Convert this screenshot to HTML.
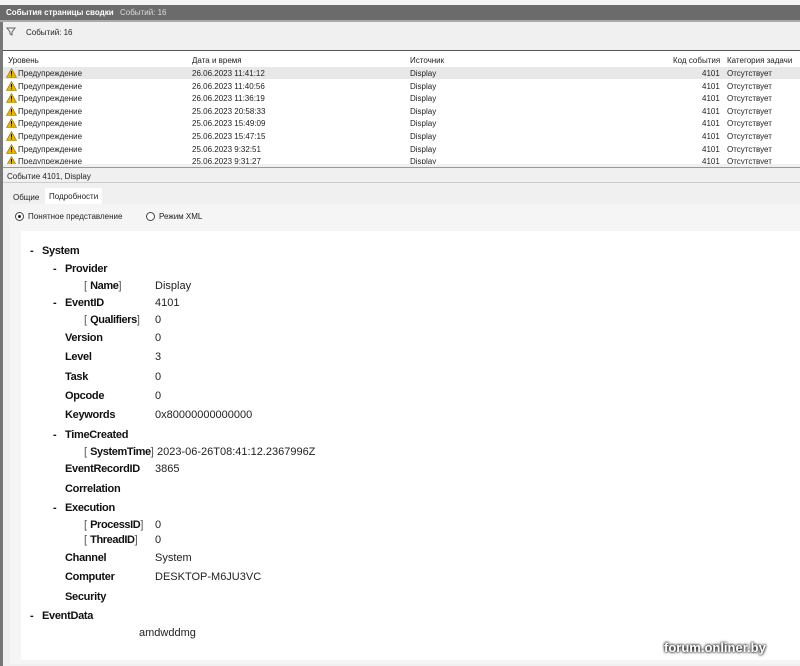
<!DOCTYPE html>
<html><head><meta charset="utf-8"><style>
body{margin:0;width:800px;height:666px;overflow:hidden;background:#f0f0f0;font-family:"Liberation Sans","DejaVu Sans",sans-serif;position:relative}
div,span{position:absolute;white-space:nowrap}
.s{font-size:8px;color:#222}
.d{font-size:11px;color:#222}
.b{font-weight:bold;color:#111;letter-spacing:-0.3px}
</style></head><body>
<div style="left:0;top:0;width:800px;height:5px;background:#f4f4f4"></div>
<div style="left:0;top:5px;width:800px;height:15px;background:#6b6b6b"></div>
<div class="s" style="left:6px;top:8px;color:#fff;font-weight:bold">События страницы сводки</div>
<div class="s" style="left:120px;top:8px;color:#ddd">Событий: 16</div>
<div style="left:0;top:20px;width:800px;height:2px;background:#aaa"></div>
<div style="left:0;top:22px;width:3px;height:644px;background:#777"></div>
<svg style="position:absolute;left:6px;top:27px" width="10" height="9"><path d="M1 1H9L6 5V8L4 7V5Z" fill="none" stroke="#666" stroke-width="1"/></svg>
<div class="s" style="left:26px;top:28px">Событий: 16</div>
<div style="left:3px;top:50px;width:797px;height:114px;background:#fff;border-top:1px solid #555;border-bottom:2px solid #555"></div>
<div style="left:3px;top:67px;width:797px;height:12px;background:#e8e8e8"></div>
<div class="s" style="left:8px;top:56px">Уровень</div>
<div class="s" style="left:192px;top:56px">Дата и время</div>
<div class="s" style="left:410px;top:56px">Источник</div>
<div class="s" style="left:673px;top:56px">Код события</div>
<div class="s" style="left:727px;top:56px">Категория задачи</div>
<div id="rows"></div>
<div style="left:3px;top:167px;width:797px;height:1px;background:#999"></div>
<div class="s" style="left:7px;top:172px">Событие 4101, Display</div>
<div style="left:3px;top:182px;width:797px;height:1px;background:#ccc"></div>
<div class="s" style="left:13px;top:193px">Общие</div>
<div style="left:45px;top:188px;width:57px;height:16px;background:#fff"></div>
<div class="s" style="left:49px;top:192px">Подробности</div>
<div style="left:10px;top:204px;width:790px;height:460px;background:#f5f5f5"></div>
<div style="left:15px;top:212px;width:7px;height:7px;border:1px solid #444;border-radius:50%;background:#fff"></div>
<div style="left:18px;top:215px;width:3px;height:3px;border-radius:50%;background:#222"></div>
<div class="s" style="left:28px;top:212px">Понятное представление</div>
<div style="left:146px;top:212px;width:7px;height:7px;border:1px solid #444;border-radius:50%;background:#fff"></div>
<div class="s" style="left:159px;top:212px">Режим XML</div>
<div style="left:21px;top:231px;width:779px;height:429px;background:#fff"></div>
<div id="det"></div>
<div style="left:664px;top:640px;font-size:13px;font-weight:bold;color:#fff;text-shadow:0 0 3px #000,0 0 2px #000">forum.onliner.by</div>
<script>
var d=["26.06.2023 11:41:12","26.06.2023 11:40:56","26.06.2023 11:36:19","25.06.2023 20:58:33","25.06.2023 15:49:09","25.06.2023 15:47:15","25.06.2023 9:32:51","25.06.2023 9:31:27"];
var h="";d.forEach(function(t,i){var y=Math.round(69+i*12.6);if(y>158)y=158;
h+='<svg style="position:absolute;left:6px;top:'+(y-1)+'px" width="11" height="10"><path d="M5.5 0.5L10.5 9.5H0.5Z" fill="#e8b800" stroke="#8a6d00" stroke-width="0.6"/><rect x="5" y="3" width="1" height="3.5" fill="#000"/><rect x="5" y="7.3" width="1" height="1" fill="#000"/></svg>';
h+='<div class="s" style="left:18px;top:'+y+'px">Предупреждение</div><div class="s" style="left:192px;top:'+y+'px">'+t+'</div><div class="s" style="left:410px;top:'+y+'px">Display</div><div class="s" style="left:702px;top:'+y+'px">4101</div><div class="s" style="left:727px;top:'+y+'px">Отсутствует</div>';});
h+='<div style="left:3px;top:164px;width:797px;height:3px;background:#f0f0f0"></div>';
document.getElementById("rows").innerHTML=h;
var L=[[245,30,"System",1],[263,53,"Provider",1],[280,84,"[ <b>Name</b>]",0,"Display"],[297,53,"EventID",1,"4101"],[314,84,"[ <b>Qualifiers</b>]",0,"0"],[332,65,"Version",0,"0"],[351,65,"Level",0,"3"],[371,65,"Task",0,"0"],[390,65,"Opcode",0,"0"],[409,65,"Keywords",0,"0x80000000000000"],[429,53,"TimeCreated",1],[446,84,"[ <b>SystemTime</b>]",0,"2023-06-26T08:41:12.2367996Z"],[463,65,"EventRecordID",0,"3865"],[483,65,"Correlation",0],[502,53,"Execution",1],[519,84,"[ <b>ProcessID</b>]",0,"0"],[534,84,"[ <b>ThreadID</b>]",0,"0"],[552,65,"Channel",0,"System"],[571,65,"Computer",0,"DESKTOP-M6JU3VC"],[591,65,"Security",0],[610,30,"EventData",1]];
var g="";L.forEach(function(l){var x=l[1];
if(l[3]){g+='<div class="d b" style="left:'+x+'px;top:'+l[0]+'px">-</div>';x+=12;}
if(l[2][0]=="[")g+='<div class="d" style="left:'+x+'px;top:'+l[0]+'px;color:#555">'+l[2].replace('<b>','<b style="color:#111;letter-spacing:-0.4px">')+'</div>';
else g+='<div class="d b" style="left:'+x+'px;top:'+l[0]+'px">'+l[2]+'</div>';
if(l[4])g+='<div class="d" style="left:'+(l[2].indexOf("SystemTime")>0?157:155)+'px;top:'+l[0]+'px">'+l[4]+'</div>';});
g+='<div class="d" style="left:139px;top:627px">amdwddmg</div>';
document.getElementById("det").innerHTML=g;
</script>
</body></html>
